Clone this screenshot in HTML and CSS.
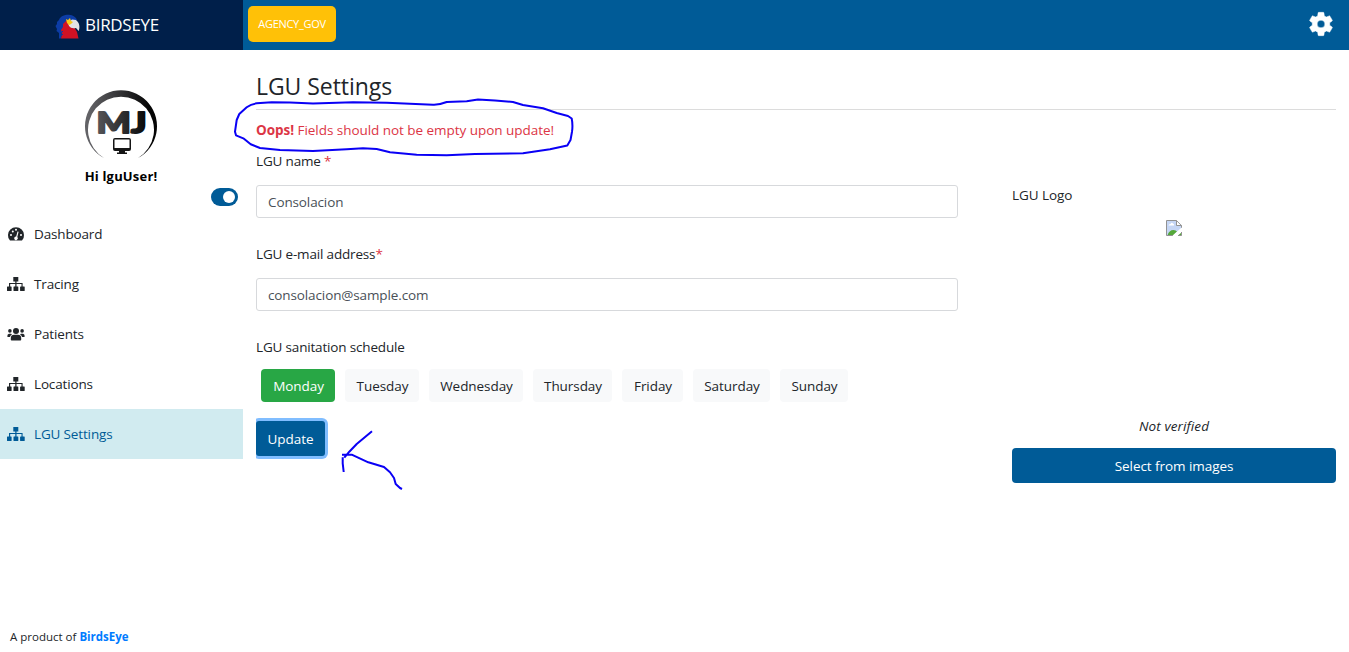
FILE: index.html
```html
<!DOCTYPE html>
<html lang="en">
<head>
<meta charset="utf-8">
<title>LGU Settings</title>
<link rel="stylesheet" href="styles.css">
</head>
<body>
<svg class="defs" width="0" height="0">
  <symbol id="sitemap" viewBox="0 0 18 14">
    <path fill="currentColor" d="M6.300 0h5v4.400H9.500V6H15.600v3.400h1.600q.5 0 .5.500v3.600q0 .5-.5.500h-3.600q-.5 0-.5-.500v-3.600q0-.5.5-.500H14.500V7.100H9.500v2.300h1.300q.5 0 .5.500v3.600q0 .5-.5.500H7q-.5 0-.5-.500v-3.600q0-.5.5-.500h1.300V7.100H3.200v2.300h.9q.5 0 .5.500v3.600q0 .5-.5.500H.5q-.5 0-.5-.500v-3.600q0-.5.5-.500H2V6h6.300V4.400H6.300z"/>
  </symbol>
</svg>
<header class="topbar">
  <div class="brand">
    <svg class="eagle" viewBox="0 0 25 25">
      <path fill="#0c3ca5" d="M4 24.500L4 19 1.500 17 2 15 .5 12 2 10 2 8 4 6C5 2 10 .5 14 .7C18 1 21 3 22 6L13 8 9 13 7 19 6 24.500z"/>
      <path fill="#d01224" d="M6 24.500L7 19 6 16 8 13 8 10 12 6 19 13 22 18 23.500 24.500z"/>
      <path fill="#e3e3e5" d="M13 9L17 5.500 21 6Q26 10 23.700 17L21 14Q16 15 14 12z"/>
      <path fill="#f8c91c" d="M11 5l2 1 2-2 1 3 2 1-2 2-2 1-2-2z"/>
      <path stroke="#0c3ca5" d="M6 15l-2 2m4 0l-3 3m3 0l-3 3"/>
    </svg>
    <span>BIRDSEYE</span>
  </div>
  <div class="agency">AGENCY_GOV</div>
  <svg class="cog" viewBox="0 0 24 24"><path fill="#fff" stroke="#fff" stroke-width=".4" stroke-linejoin="round" d="M19.430 12.980c.04-.32.07-.64.07-.98s-.03-.66-.07-.98l2.110-1.650c.19-.15.24-.42.12-.64l-2-3.460c-.12-.22-.39-.3-.61-.22l-2.490 1c-.52-.4-1.080-.73-1.690-.98l-.38-2.650C14.460 2.180 14.250 2 14 2h-4c-.25 0-.46.18-.49.42l-.38 2.650c-.61.25-1.170.59-1.690.98l-2.490-1c-.23-.09-.49 0-.61.22l-2 3.460c-.13.22-.07.49.12.64l2.110 1.650c-.04.32-.07.65-.07.98s.03.66.07.98l-2.110 1.650c-.19.15-.24.42-.12.64l2 3.460c.12.22.39.3.61.22l2.490-1c.52.4 1.080.73 1.690.98l.38 2.650c.03.24.24.42.49.42h4c.25 0 .46-.18.49-.42l.38-2.650c.61-.25 1.170-.59 1.690-.98l2.490 1c.23.09.49 0 .61-.22l2-3.460c.12-.22.07-.49-.12-.64l-2.110-1.650zM12 15.300a3.300 3.300 0 110-6.600 3.300 3.300 0 010 6.600z"/></svg>
</header>
<div class="page">
  <aside class="sidebar">
    <div class="profile">
      <svg class="avatar" viewBox="0 0 74 74">
        <defs><linearGradient id="ink" gradientUnits="userSpaceOnUse" x1="5" y1="0" x2="65" y2="0"><stop offset="0" stop-color="#626266"/><stop offset="1" stop-color="#050505"/></linearGradient></defs>
        <path fill="url(#ink)" d="M20 69A36 36 0 1 1 54 69A33 33 0 1 0 20 69z"/>
        <text class="monogram" x="12.500" y="43.500" textLength="50" lengthAdjust="spacingAndGlyphs" fill="url(#ink)" stroke="url(#ink)">MJ</text>
        <path fill="#151515" fill-rule="evenodd" d="M31 49h14q2 0 2 2v9q0 2-2 2h-4v1.500h2V65H33v-1.500h2V62h-4q-2 0-2-2v-9q0-2 2-2zm-.5 1.500v8.500h15v-8.500z"/>
      </svg>
      <strong class="greeting">Hi lguUser!</strong>
    </div>
    <div class="toggle"><i></i></div>
    <nav>
      <a class="item"><svg viewBox="0 0 18 14"><path fill="currentColor" fill-rule="evenodd" d="M3 13.500Q.8 11.500 1 8A8 7.700 0 0 1 17 8Q17.200 11.500 15 13.500zM8 9.800A1.800 1.800 0 1 0 10.300 10L11.600 4.800 10.500 4.500 9.200 9.500zM3 8a1 1 0 1 0 2 0 1 1 0 1 0-2 0zM4.800 4.500a1 1 0 1 0 2 0 1 1 0 1 0-2 0zM8 2.700a1 1 0 1 0 2 0 1 1 0 1 0-2 0zM13 8a1 1 0 1 0 2 0 1 1 0 1 0-2 0z"/></svg><span>Dashboard</span></a>
      <a class="item"><svg viewBox="0 0 18 14"><use href="#sitemap"/></svg><span>Tracing</span></a>
      <a class="item"><svg viewBox="0 0 18 14"><g fill="currentColor"><circle cx="9" cy="4" r="3"/><circle cx="2.900" cy="3.900" r="1.800"/><circle cx="15.100" cy="3.900" r="1.800"/><path d="M3.800 12.700V11Q4 7.700 7 7.700h4q3 0 3.200 3.300v1.700q0 .7-.8.7H4.600q-.8 0-.8-.7zM.3 9.300Q.3 6.700 2 6.700h2l1 .5Q3.300 8.300 3 10H.9Q.3 10 .3 9.300zM17.700 9.300Q17.700 6.700 16 6.700h-2l-1 .5q1.700 1.100 2 2.800h2.100q.6 0 .6-.7z"/></g></svg><span>Patients</span></a>
      <a class="item"><svg viewBox="0 0 18 14"><use href="#sitemap"/></svg><span>Locations</span></a>
      <a class="item active"><svg viewBox="0 0 18 14"><use href="#sitemap"/></svg><span>LGU Settings</span></a>
    </nav>
    <footer>A product of <b>BirdsEye</b></footer>
  </aside>
  <main>
    <h1>LGU Settings</h1>
    <div class="columns">
      <section class="form">
        <p class="error"><b>Oops!</b> Fields should not be empty upon update!</p>
        <label>LGU name <em>*</em></label>
        <div class="field">Consolacion</div>
        <label>LGU e-mail address<em>*</em></label>
        <div class="field">consolacion@sample.com</div>
        <label>LGU sanitation schedule</label>
        <div class="days">
          <span class="day on w74">Monday</span>
          <span class="day w74">Tuesday</span>
          <span class="day w94">Wednesday</span>
          <span class="day w79">Thursday</span>
          <span class="day w61">Friday</span>
          <span class="day w77">Saturday</span>
          <span class="day w68">Sunday</span>
        </div>
        <div class="update">Update</div>
      </section>
      <section class="logo">
        <div class="logo-title">LGU Logo</div>
        <div class="preview">
          <svg width="16" height="16" viewBox="0 0 16 16">
            <path fill="#c5d6f5" d="M.5.500h10L15.500 5v3L8 15.500H.5z"/>
            <path fill="#fff" d="M2.500 5.500Q2.500 4 4.500 4q1-2 2.500-.5Q8.500 4 8 5.500z"/>
            <path fill="#55a83a" d="M1.500 15.500Q3 10 7.500 10q2.500 0 3.500 1.500L7 15.500zM12 15.500l3.500-3v3z"/>
            <path fill="none" stroke="#929292" d="M7 15.500H.5V.500h10l5 5V8M10.500.500v5h5M12 15.500h3.500V12"/>
            <path fill="#fff" d="M11 1.500L14.500 5H11z"/>
            <path stroke="#fff" stroke-width="2.500" d="M7.500 16.500L16.500 8.500"/>
          </svg>
        </div>
        <div class="status">Not verified</div>
        <div class="select">Select from images</div>
      </section>
    </div>
  </main>
</div>
<svg class="ink" viewBox="0 0 1349 652">
  <path d="M246.700 107.300Q251 104 256.700 103.300L271.700 102.300 290 102.500 313 103.400 353 102.300 386.700 102.700 433 104.700Q439 105 446.700 102L466.700 101.300 478 99.500 495 100.500 513 102 523 105 543 108.300 556.700 113 568 116 571.700 118.500Q573 125 572 131.700L570.500 140 567.300 145.500 550 149.300 523 153.300 475 154 446.700 155.300 416.700 154.700 390 152.300 376.700 149 363 148.300 346.700 149.300 313 151 280 150 260 148 250.700 144.300 243.300 138.300 236 135.300 235 131.700 236.700 120 239.300 114z"/>
  <path d="M372 431.300L356.700 444 349.300 451.700 344.300 457.700M342.700 457.300V463.300L343.700 472M342 454.700H351.700L368.300 462.300 384 467 390 472.300 394 478 395.700 484 400 488 402 489"/>
</svg>
</body>
</html>
```
FILE: styles.css
```css
* { box-sizing: border-box; }
body {
  margin: 0;
  height: 652px;
  overflow: hidden;
  background: #fff;
  color: #212529;
  font: 13.500px/20px "Open Sans", "Noto Sans", sans-serif;
  letter-spacing: -.06px;
}
.defs { position: absolute; }
.topbar { display: flex; align-items: center; height: 50px; background: #005b97; color: #fff; }
.brand { display: flex; width: 243px; height: 50px; padding-left: 55px; align-items: center; background: #001f4a; font-size: 17px; letter-spacing: -.3px; }
.eagle { width: 25px; height: 25px; margin: 3px 5px 0 0; }
.agency { width: 88px; height: 36px; margin: -2px 0 0 5px; border-radius: 5px; background: #ffc107; text-align: center; font-size: 11px; line-height: 36px; letter-spacing: -.3px; }
.cog { width: 28px; height: 28px; margin: -2px 14px 0 auto; }
.page { display: flex; height: 602px; }
.sidebar { display: flex; flex-direction: column; width: 243px; }
.profile { display: flex; flex-direction: column; align-items: center; width: 242px; padding-top: 39px; }
.avatar { width: 74px; height: 74px; }
.monogram { font: 900 28px Lato, sans-serif; letter-spacing: 0; stroke-width: 1.800px; stroke-linejoin: round; }
.greeting { margin-top: 3px; color: #000; font-size: 13px; letter-spacing: .18px; }
.toggle { display: flex; justify-content: flex-end; width: 27px; height: 18px; margin: 2px 5px 0 auto; padding: 3px; border-radius: 9px; background: #005b97; }
.toggle i { width: 12px; height: 12px; border-radius: 50%; background: #fff; }
nav { margin-top: 3px; letter-spacing: -.15px; }
.item { display: flex; align-items: center; height: 50px; padding-left: 7px; }
.item svg { width: 18px; height: 14px; margin-right: 9px; }
.active { background: #d1ebf0; color: #005b97; }
footer { margin: auto 0 5px 10px; font-size: 11.500px; letter-spacing: 0; }
footer b { color: #007bff; }
main { flex: 1; padding: 20px 13px 0; }
h1 { height: 40px; margin: 0; border-bottom: 1px solid #dcdcdc; font-size: 23px; font-weight: 400; line-height: 33px; }
.columns { display: flex; justify-content: space-between; }
.form { width: 702px; }
.error { height: 20px; margin: 10px 0 11px; color: #dc3545; letter-spacing: -.04px; }
label { display: block; height: 20px; letter-spacing: -.17px; }
label em { color: #dc3545; font-style: normal; }
.field { height: 33px; margin: 14px 0 26px; padding: 0 11px; border: 1px solid #d7d9dc; border-radius: 3px; color: #495057; line-height: 32px; letter-spacing: -.12px; }
.days { display: flex; gap: 10px; margin: 12px 0 0 5px; }
.day { height: 33px; padding-left: 1px; border-radius: 4px; background: #f8f9fa; text-align: center; line-height: 34px; white-space: nowrap; }
.on { background: #28a745; color: #fff; }
.w74 { width: 74px; } .w94 { width: 94px; } .w79 { width: 79px; } .w61 { width: 61px; } .w77 { width: 77px; } .w68 { width: 68px; }
.update { width: 69px; height: 35px; margin-top: 19px; border-radius: 3px; background: #005b97; box-shadow: 0 0 0 3px #80bdff; clip-path: inset(-4px -4px -4px 0); color: #fff; text-align: center; line-height: 36px; }
.logo { width: 324px; padding-top: 75px; }
.preview { display: flex; justify-content: center; height: 211px; padding-top: 15px; }
.status { font-style: italic; text-align: center; letter-spacing: .1px; }
.select { height: 35px; margin-top: 12px; border-radius: 4px; background: #005b97; color: #fff; text-align: center; line-height: 36px; }
.ink { position: absolute; left: 0; top: 0; width: 1349px; height: 652px; fill: none; stroke: #0a00f5; stroke-width: 2; stroke-linejoin: round; pointer-events: none; }
```
